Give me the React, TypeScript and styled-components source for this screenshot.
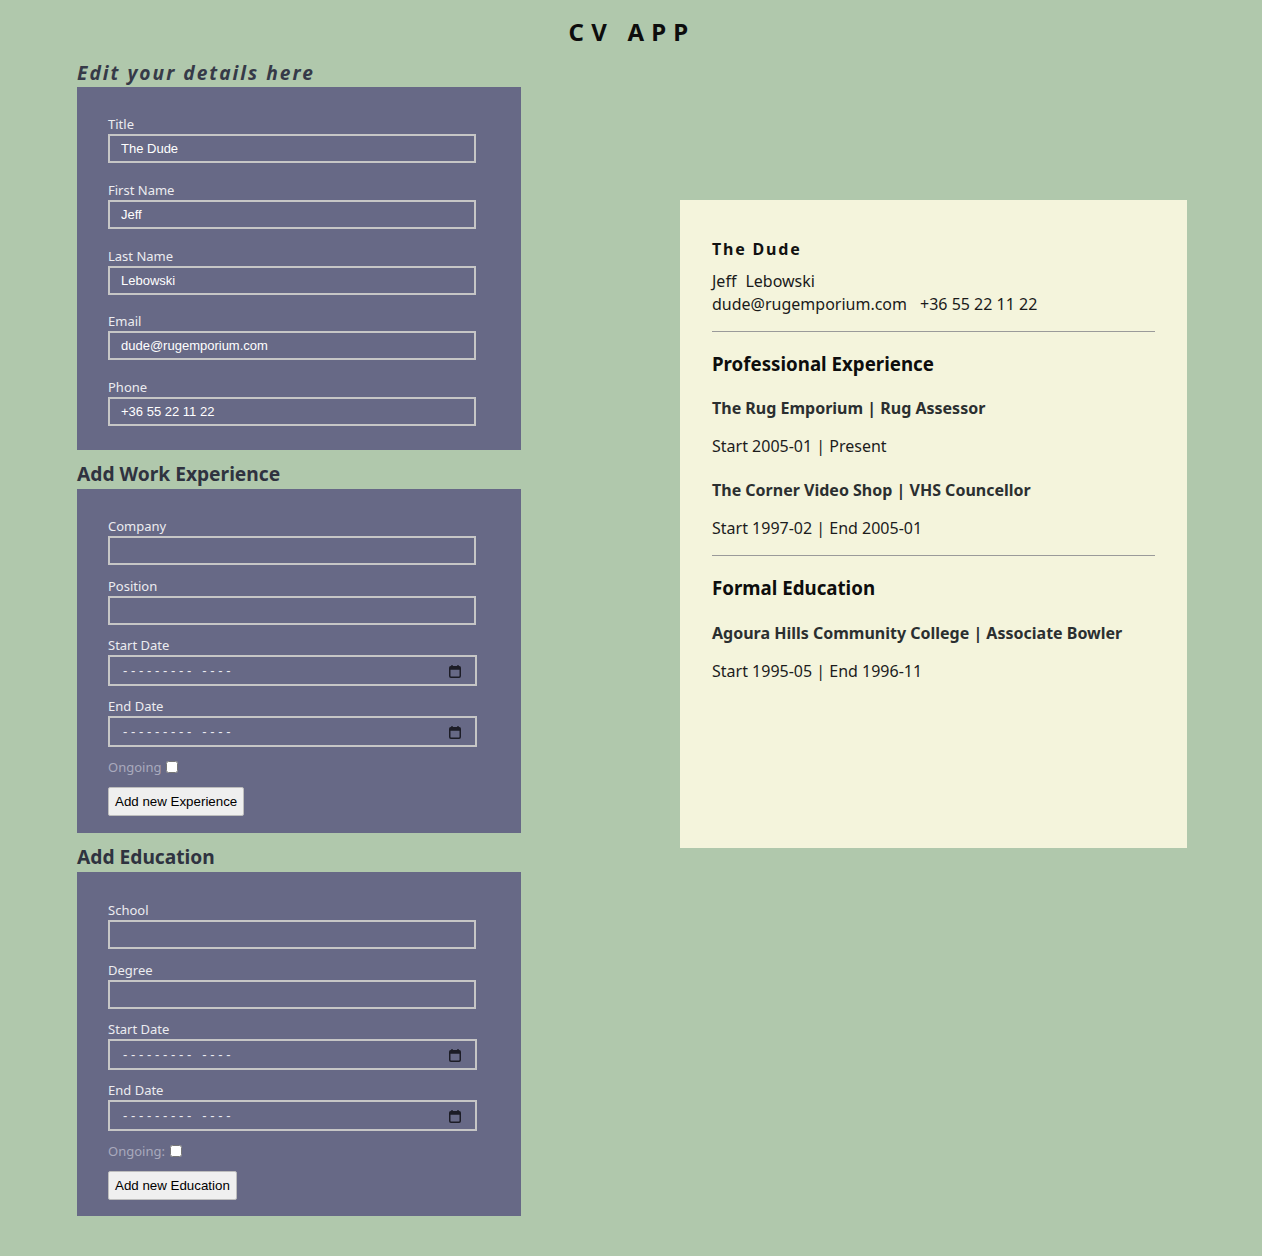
import React from "react";
import styled, { createGlobalStyle } from "styled-components";

const GlobalStyle = createGlobalStyle`
  html, body { margin: 0; padding: 0; background: #b0c8ac; }
  body { font-family: "Noto Sans", "Open Sans", sans-serif; }
  * { box-sizing: border-box; }
`;

const Page = styled.div`
  padding: 0 75px 40px 77px;
`;

const AppTitle = styled.h1`
  margin: 15px 0 11px;
  text-align: center;
  font-size: 24px;
  line-height: 33px;
  font-weight: 700;
  letter-spacing: 0.3em;
  color: #0d0d0d;
`;

const Columns = styled.div`
  display: flex;
  justify-content: space-between;
  align-items: flex-start;
`;

const Editor = styled.section`
  width: 444px;
  display: flex;
  flex-direction: column;
`;

const EditorHeading = styled.h2`
  margin: 0;
  font-size: 19.2px;
  line-height: 28px;
  font-style: italic;
  font-weight: 700;
  letter-spacing: 2px;
  color: #363a48;
`;

const SectionHeading = styled.h2`
  margin: 11px 0 2px;
  font-size: 19.2px;
  line-height: 26px;
  font-weight: 700;
  color: #2f3340;
`;

const FormPanel = styled.form<{ $pad: string }>`
  background: #676986;
  padding: ${(p) => p.$pad};
  display: flex;
  flex-direction: column;
  align-items: flex-start;
`;

const Field = styled.div<{ $space: number }>`
  display: flex;
  flex-direction: column;
  gap: 1px;
  margin-bottom: ${(p) => p.$space}px;
`;

const Label = styled.label`
  font-size: 13px;
  line-height: 18px;
  color: #ececf0;
`;

const TextInput = styled.input`
  width: 368px;
  height: 29px;
  border: 2px solid #c6c6c6;
  background: transparent;
  color: #ffffff;
  font-family: "Liberation Sans", Arial, sans-serif;
  font-size: 13px;
  padding: 0 11px;
  outline: none;
`;

const MonthBox = styled.div`
  width: 369px;
  height: 31px;
  border: 2px solid #c6c6c6;
  display: flex;
  align-items: center;
  padding: 0 14px 0 13px;
  gap: 8px;
`;

const MonthText = styled.input`
  flex: 1;
  min-width: 0;
  height: 100%;
  border: 0;
  padding: 0;
  background: transparent;
  outline: none;
  color: #ffffff;
  font-family: "Liberation Sans", Arial, sans-serif;
  font-size: 13px;
  &::placeholder {
    color: #ececf0;
    letter-spacing: 3.67px;
    opacity: 1;
  }
`;

const CalendarIcon = styled.svg`
  width: 12px;
  height: 13px;
  flex: none;
  margin-top: 1px;
`;

const CheckRow = styled.div`
  display: flex;
  align-items: center;
  height: 18px;
  margin-bottom: 11px;
`;

const CheckLabel = styled.label`
  font-size: 13px;
  line-height: 18px;
  color: #a9aabd;
`;

const Check = styled.input`
  width: 12px;
  height: 12px;
  margin: 0 0 0 5px;
`;

const Button = styled.button`
  height: 29px;
  padding: 0 6px;
  font-family: "Liberation Sans", Arial, sans-serif;
  font-size: 13.33px;
  color: #000;
  background: #efefef;
  border: 1px solid #bdbdbd;
  border-radius: 2px;
`;

const CVPanel = styled.article`
  width: 507px;
  height: 648px;
  margin-top: 141px;
  background: #f4f4dc;
  padding: 38px 32px 0;
  color: #1a1a1a;
`;

const CVName = styled.div`
  font-size: 16px;
  line-height: 22px;
  font-weight: 700;
  letter-spacing: 1.8px;
  color: #111;
`;

const CVRow = styled.div<{ $gap: number; $top: number }>`
  display: flex;
  gap: ${(p) => p.$gap}px;
  margin-top: ${(p) => p.$top}px;
  font-size: 16px;
  line-height: 23px;
  color: #1a1a1a;
`;

const Divider = styled.hr<{ $top: number }>`
  margin: ${(p) => p.$top}px 0 0;
  border: 0;
  border-top: 1px solid #9a9a9a;
`;

const CVSection = styled.h3`
  margin: 19px 0 0;
  font-size: 18.72px;
  line-height: 26px;
  font-weight: 700;
  color: #0d0d0d;
`;

const Entry = styled.div<{ $top: number }>`
  margin-top: ${(p) => p.$top}px;
`;

const EntryTitle = styled.div`
  font-size: 16px;
  line-height: 22px;
  font-weight: 700;
  color: #2b2f30;
`;

const EntryDates = styled.div`
  margin-top: 16px;
  font-size: 16px;
  line-height: 22px;
  color: #1c1c1c;
`;

const personal = [
  { label: "Title", value: "The Dude" },
  { label: "First Name", value: "Jeff" },
  { label: "Last Name", value: "Lebowski" },
  { label: "Email", value: "dude@rugemporium.com" },
  { label: "Phone", value: "+36 55 22 11 22" },
];

const jobs = [
  { title: "The Rug Emporium | Rug Assessor", dates: "Start 2005-01 | Present" },
  { title: "The Corner Video Shop | VHS Councellor", dates: "Start 1997-02 | End 2005-01" },
];

const schools = [
  { title: "Agoura Hills Community College | Associate Bowler", dates: "Start 1995-05 | End 1996-11" },
];

function MonthField() {
  return (
    <MonthBox>
      <MonthText type="text" placeholder="--------- ----" />
      <CalendarIcon viewBox="0 0 12 13" aria-hidden="true">
        <rect x="2.3" y="0" width="1.4" height="3" fill="#1c1c26" />
        <rect x="8.3" y="0" width="1.4" height="3" fill="#1c1c26" />
        <rect x="0.75" y="1.75" width="10.5" height="10.5" rx="1.2" fill="none" stroke="#1c1c26" strokeWidth="1.5" />
        <rect x="0.75" y="1.75" width="10.5" height="3" fill="#1c1c26" />
      </CalendarIcon>
    </MonthBox>
  );
}

function EntryForm({
  textFields,
  ongoing,
  button,
  pad,
}: {
  textFields: string[];
  ongoing: string;
  button: string;
  pad: string;
}) {
  return (
    <FormPanel $pad={pad} onSubmit={(e) => e.preventDefault()}>
      {textFields.map((f, i) => (
        <Field key={f} $space={i === 0 ? 12 : 11}>
          <Label>{f}</Label>
          <TextInput type="text" />
        </Field>
      ))}
      <Field $space={11}>
        <Label>Start Date</Label>
        <MonthField />
      </Field>
      <Field $space={11}>
        <Label>End Date</Label>
        <MonthField />
      </Field>
      <CheckRow>
        <CheckLabel>{ongoing}</CheckLabel>
        <Check type="checkbox" />
      </CheckRow>
      <Button type="button">{button}</Button>
    </FormPanel>
  );
}

export default function App() {
  return (
    <>
      <GlobalStyle />
      <Page>
        <AppTitle>CV APP</AppTitle>
        <Columns>
          <Editor>
            <EditorHeading>Edit your details here</EditorHeading>
            <FormPanel $pad="28px 31px 24px" onSubmit={(e) => e.preventDefault()}>
              {personal.map((f, i) => (
                <Field key={f.label} $space={i === personal.length - 1 ? 0 : 17.75}>
                  <Label>{f.label}</Label>
                  <TextInput type="text" defaultValue={f.value} />
                </Field>
              ))}
            </FormPanel>
            <SectionHeading>Add Work Experience</SectionHeading>
            <EntryForm
              pad="28px 31px 17px"
              textFields={["Company", "Position"]}
              ongoing="Ongoing"
              button="Add new Experience"
            />
            <SectionHeading>Add Education</SectionHeading>
            <EntryForm
              pad="29px 31px 16px"
              textFields={["School", "Degree"]}
              ongoing="Ongoing:"
              button="Add new Education"
            />
          </Editor>
          <CVPanel>
            <CVName>The Dude</CVName>
            <CVRow $gap={9} $top={10}>
              <span>Jeff</span>
              <span>Lebowski</span>
            </CVRow>
            <CVRow $gap={13} $top={0}>
              <span>dude@rugemporium.com</span>
              <span>+36 55 22 11 22</span>
            </CVRow>
            <Divider $top={15} />
            <CVSection>Professional Experience</CVSection>
            {jobs.map((j, i) => (
              <Entry key={j.title} $top={i === 0 ? 20 : 22}>
                <EntryTitle>{j.title}</EntryTitle>
                <EntryDates>{j.dates}</EntryDates>
              </Entry>
            ))}
            <Divider $top={16} />
            <CVSection>Formal Education</CVSection>
            {schools.map((s) => (
              <Entry key={s.title} $top={21}>
                <EntryTitle>{s.title}</EntryTitle>
                <EntryDates>{s.dates}</EntryDates>
              </Entry>
            ))}
          </CVPanel>
        </Columns>
      </Page>
    </>
  );
}
